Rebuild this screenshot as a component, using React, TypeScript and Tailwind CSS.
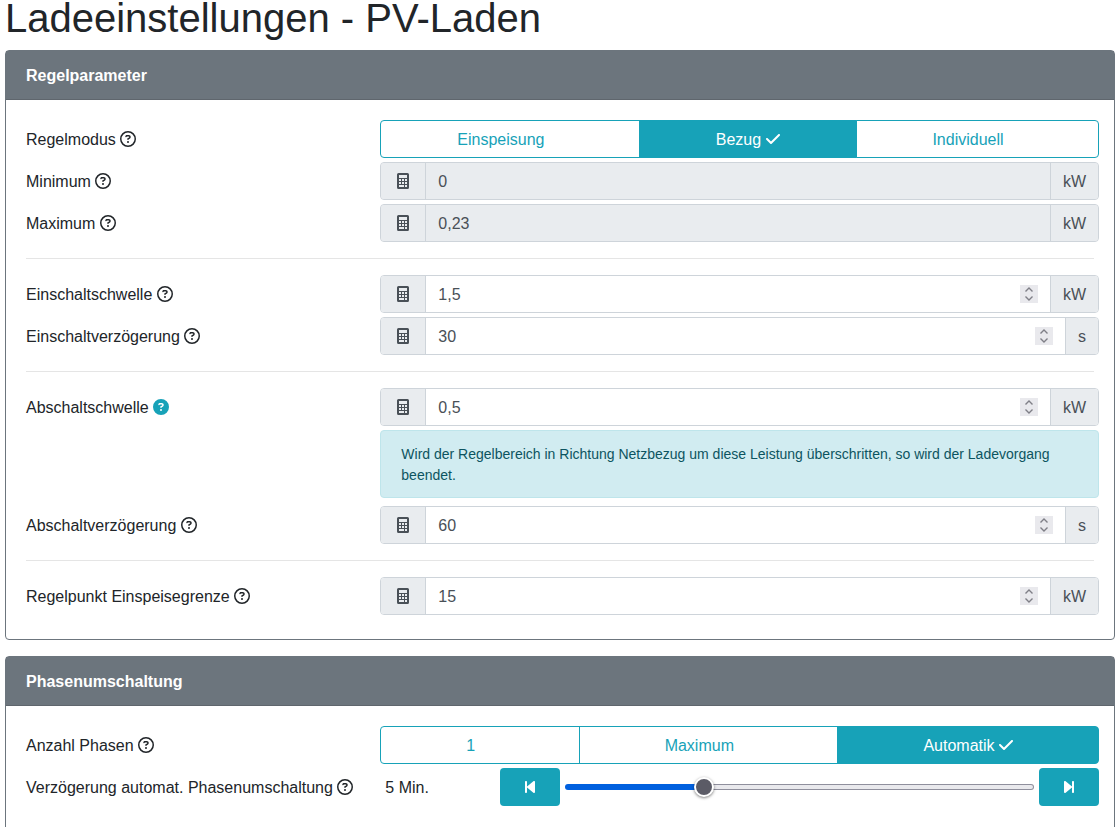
import { useId, useState } from "react";
import type { ReactNode } from "react";
import {
  FaBackwardStep,
  FaCheck,
  FaCircleQuestion,
  FaForwardStep,
  FaRegCircleQuestion,
} from "react-icons/fa6";

const CalculatorIcon = () => (
  <svg viewBox="0 0 12 16" className="h-4 w-3" fill="currentColor" aria-hidden="true">
    <path
      fillRule="evenodd"
      d="M1.5 0h9A1.5 1.5 0 0 1 12 1.5v13a1.5 1.5 0 0 1-1.5 1.5h-9A1.5 1.5 0 0 1 0 14.5v-13A1.5 1.5 0 0 1 1.5 0zM2 2v3h8V2zM2 6v2h2V6zM5 6v2h2V6zM8 6v2h2V6zM2 9v2h2V9zM5 9v2h2V9zM8 9v2h2V9zM2 12v2h5v-2zM8 12v2h2v-2z"
    />
  </svg>
);

const Card = ({ title, children }: { title: string; children: ReactNode }) => {
  return (
    <section className="mb-4 rounded border border-[#6c757d] bg-white">
      <h2 className="border-b border-[#5f666d] bg-[#6c757d] px-5 pt-[13px] pb-[11px] text-base leading-6 font-bold text-white">
        {title}
      </h2>
      <div className="p-5">{children}</div>
    </section>
  );
};

type RowProps = {
  label: string;
  htmlFor?: string;
  labelId?: string;
  help?: string;
  children: ReactNode;
};

const Row = ({ label, htmlFor, labelId, help, children }: RowProps) => {
  const [open, setOpen] = useState(!!help);

  return (
    <div className="-mx-[5px] mb-1 flex items-start">
      <div className="w-1/3 px-[5px] pt-2 pb-[6px] leading-6">
        <label id={labelId} htmlFor={htmlFor}>
          {label}
        </label>{" "}
        <button
          type="button"
          aria-label={`Hilfe zu ${label}`}
          aria-expanded={open}
          onClick={() => setOpen(!open)}
          className="cursor-pointer"
        >
          {open ? (
            <FaCircleQuestion className="inline-block size-4 align-[-2px] text-[#17a2b8]" />
          ) : (
            <FaRegCircleQuestion className="inline-block size-4 align-[-2px]" />
          )}
        </button>
      </div>
      <div className="w-2/3">
        {children}
        {help && open && (
          <p className="my-1 rounded border border-[#bee5eb] bg-[#d1ecf1] px-5 pt-[13px] pb-[11px] text-sm leading-[21px] text-[#0c5460]">
            {help}
          </p>
        )}
      </div>
    </div>
  );
};

type ButtonGroupProps = {
  label: string;
  options: string[];
  initial: string;
};

const ButtonGroup = ({ label, options, initial }: ButtonGroupProps) => {
  const id = useId();
  const [selected, setSelected] = useState(initial);

  return (
    <Row label={label} labelId={id}>
      <div role="radiogroup" aria-labelledby={id} className="flex">
        {options.map((option) => (
          <label
            key={option}
            className={`relative -ml-px flex-auto cursor-pointer border border-[#17a2b8] px-3 pt-[7px] pb-[5px] text-center leading-6 first:ml-0 first:rounded-l last:rounded-r ${
              option === selected
                ? "bg-[#17a2b8] text-white"
                : "bg-white text-[#17a2b8]"
            }`}
          >
            <input
              type="radio"
              name={id}
              checked={option === selected}
              onChange={() => setSelected(option)}
              className="sr-only"
            />
            {option}{" "}
            <FaCheck
              className={`inline-block h-4 w-[14px] align-[-2px] ${
                option === selected ? "" : "invisible"
              }`}
            />
          </label>
        ))}
      </div>
    </Row>
  );
};

type NumberFieldProps = {
  label: string;
  value: string;
  unit: string;
  step?: number;
  disabled?: boolean;
  help?: string;
};

const NumberField = ({
  label,
  value,
  unit,
  step = 1,
  disabled,
  help,
}: NumberFieldProps) => {
  const id = useId();
  const [current, setCurrent] = useState(value);

  const change = (delta: number) => {
    const next = Number(current.replace(",", ".")) + delta;
    setCurrent(String(Math.round(next * 100) / 100).replace(".", ","));
  };

  return (
    <Row label={label} htmlFor={id} help={help}>
      <div
        className={`flex h-[38px] overflow-hidden rounded border border-[#ced4da] text-[#495057] ${
          disabled ? "bg-[#e9ecef]" : "bg-white"
        }`}
      >
        <span className="flex w-[45px] shrink-0 items-center justify-center border-r border-[#ced4da] bg-[#e9ecef]">
          <CalculatorIcon />
        </span>
        <input
          id={id}
          type="text"
          inputMode="decimal"
          value={current}
          disabled={disabled}
          onChange={(e) => setCurrent(e.target.value)}
          className="min-w-0 flex-1 px-3 pt-[2px] outline-none"
        />
        {!disabled && (
          <span className="mr-3 flex size-[18px] flex-col self-center bg-[#e9e9ed] text-[#7f7f87]">
            <button
              type="button"
              aria-label={`${label} erhöhen`}
              onClick={() => change(step)}
              className="flex h-[9px] items-center justify-center"
            >
              <svg viewBox="0 0 18 9" className="h-[9px] w-[18px]" fill="none">
                <path d="M5.5 6.5 9 3l3.5 3.5" stroke="currentColor" strokeWidth="1.4" />
              </svg>
            </button>
            <button
              type="button"
              aria-label={`${label} verringern`}
              onClick={() => change(-step)}
              className="flex h-[9px] items-center justify-center"
            >
              <svg viewBox="0 0 18 9" className="h-[9px] w-[18px]" fill="none">
                <path d="M5.5 2.5 9 6l3.5-3.5" stroke="currentColor" strokeWidth="1.4" />
              </svg>
            </button>
          </span>
        )}
        <span className="flex items-center border-l border-[#ced4da] bg-[#e9ecef] px-3 pt-[2px]">
          {unit}
        </span>
      </div>
    </Row>
  );
};

type RangeFieldProps = {
  label: string;
  min: number;
  max: number;
  initial: number;
  unit: string;
};

const RangeField = ({ label, min, max, initial, unit }: RangeFieldProps) => {
  const id = useId();
  const [value, setValue] = useState(initial);
  const percent = ((value - min) / (max - min)) * 100;

  return (
    <Row label={label} htmlFor={id}>
      <div className="flex items-center">
        <output htmlFor={id} className="w-1/6 px-[5px] pt-[2px]">
          {value} {unit}
        </output>
        <div className="flex flex-1 items-center gap-[5px]">
          <button
            type="button"
            aria-label="Verringern"
            onClick={() => setValue(Math.max(min, value - 1))}
            className="flex h-[38px] w-[60px] shrink-0 items-center justify-center rounded bg-[#17a2b8] text-white"
          >
            <FaBackwardStep className="h-4 w-[10px]" />
          </button>
          <input
            id={id}
            type="range"
            min={min}
            max={max}
            value={value}
            onChange={(e) => setValue(Number(e.target.value))}
            className="h-[6px] min-w-0 flex-1 appearance-none rounded-full border border-transparent [&::-webkit-slider-thumb]:size-5 [&::-webkit-slider-thumb]:appearance-none [&::-webkit-slider-thumb]:rounded-full [&::-webkit-slider-thumb]:border-2 [&::-webkit-slider-thumb]:border-white [&::-webkit-slider-thumb]:bg-[#5b5b66] [&::-webkit-slider-thumb]:shadow-[0_1px_3px_rgba(0,0,0,0.5)]"
            style={{
              background: `linear-gradient(#0060df, #0060df) left / ${percent}% 100% no-repeat border-box, linear-gradient(#e9e9ed, #e9e9ed) padding-box, linear-gradient(#8f8f9d, #8f8f9d) border-box`,
            }}
          />
          <button
            type="button"
            aria-label="Erhöhen"
            onClick={() => setValue(Math.min(max, value + 1))}
            className="flex h-[38px] w-[60px] shrink-0 items-center justify-center rounded bg-[#17a2b8] text-white"
          >
            <FaForwardStep className="h-4 w-[10px]" />
          </button>
        </div>
      </div>
    </Row>
  );
};

const Divider = () => <hr className="my-4 border-t border-black/10" />;

const App = () => {
  return (
    <main className="bg-white pr-px pl-[5px] font-['Liberation_Sans',Arial,sans-serif] text-base text-[#212529]">
      <h1 className="mb-[14px] text-[40px] leading-9 font-normal">
        Ladeeinstellungen - PV-Laden
      </h1>
      <Card title="Regelparameter">
        <ButtonGroup
          label="Regelmodus"
          options={["Einspeisung", "Bezug", "Individuell"]}
          initial="Bezug"
        />
        <NumberField label="Minimum" value="0" unit="kW" disabled />
        <NumberField label="Maximum" value="0,23" unit="kW" disabled />
        <Divider />
        <NumberField label="Einschaltschwelle" value="1,5" unit="kW" step={0.1} />
        <NumberField label="Einschaltverzögerung" value="30" unit="s" />
        <Divider />
        <NumberField
          label="Abschaltschwelle"
          value="0,5"
          unit="kW"
          step={0.1}
          help="Wird der Regelbereich in Richtung Netzbezug um diese Leistung überschritten, so wird der Ladevorgang beendet."
        />
        <NumberField label="Abschaltverzögerung" value="60" unit="s" />
        <Divider />
        <NumberField label="Regelpunkt Einspeisegrenze" value="15" unit="kW" />
      </Card>
      <Card title="Phasenumschaltung">
        <ButtonGroup
          label="Anzahl Phasen"
          options={["1", "Maximum", "Automatik"]}
          initial="Automatik"
        />
        <RangeField
          label="Verzögerung automat. Phasenumschaltung"
          min={1}
          max={15}
          initial={5}
          unit="Min."
        />
      </Card>
    </main>
  );
};

export default App;
